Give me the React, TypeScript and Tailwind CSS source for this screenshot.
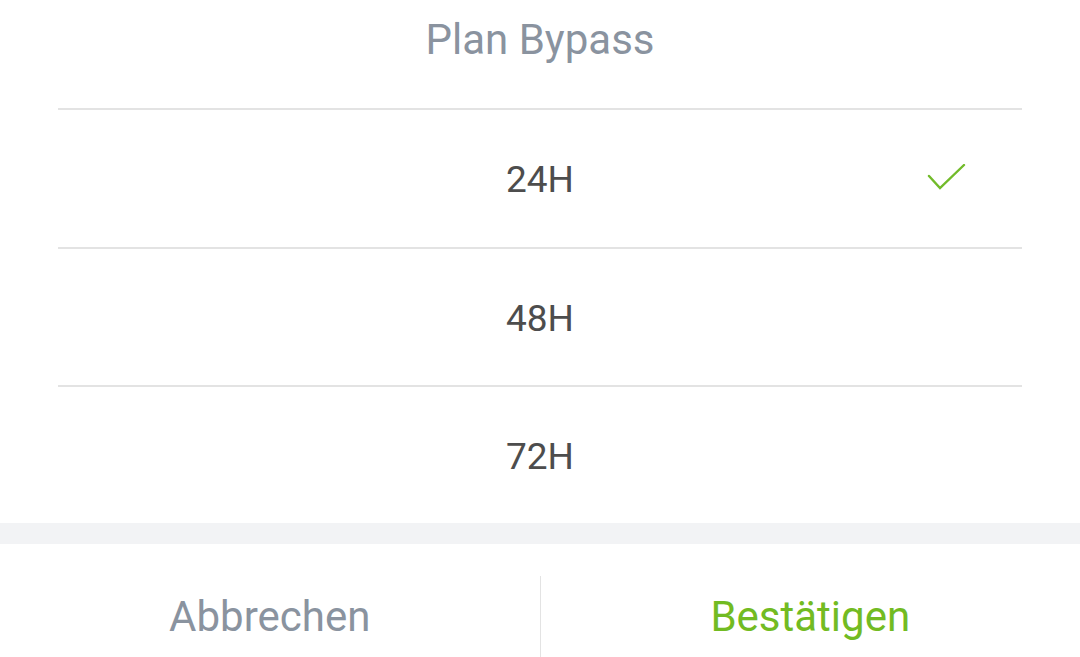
import React from "react";

const options = ["24H", "48H", "72H"];

export default function App() {
  const selected = 0;
  return (
    <div
      className="w-[1080px] h-[657px] overflow-hidden bg-white"
      style={{ fontFamily: "Roboto, 'Noto Sans', sans-serif" }}
    >
      <div className="h-[108px] flex justify-center pt-[16px]">
        <span className="text-[42px] leading-[48px] text-[#8a939f]">Plan Bypass</span>
      </div>
      <div className="mx-[58px]">
        {options.map((o, i) => (
          <div
            key={o}
            className={`relative flex items-center justify-center border-t-2 border-[#e3e3e3] pt-[3px] ${i === 0 ? "h-[139px]" : "h-[138px]"}`}
          >
            <span className="text-[37px] leading-[42px] text-[#4d4d4d]">{o}</span>
            {i === selected && (
              <svg
                className="absolute right-[56px] top-[54px]"
                width="40"
                height="30"
                viewBox="0 0 40 30"
              >
                <path
                  d="M3 12 L14 24 L38 1"
                  fill="none"
                  stroke="#72bb2a"
                  strokeWidth="2.4"
                  strokeLinecap="round"
                  strokeLinejoin="miter"
                />
              </svg>
            )}
          </div>
        ))}
      </div>
      <div className="h-[21px] bg-[#f2f3f5]" />
      <div className="flex h-[140px]">
        <div className="flex-1 flex items-center justify-center pt-[5px]">
          <span className="text-[42px] leading-[48px] text-[#8a939f]">Abbrechen</span>
        </div>
        <div className="w-px mt-8 bg-[#e3e3e3]" />
        <div className="flex-1 flex items-center justify-center pt-[5px]">
          <span className="text-[42px] leading-[48px] text-[#72bb22]">Bestätigen</span>
        </div>
      </div>
    </div>
  );
}
